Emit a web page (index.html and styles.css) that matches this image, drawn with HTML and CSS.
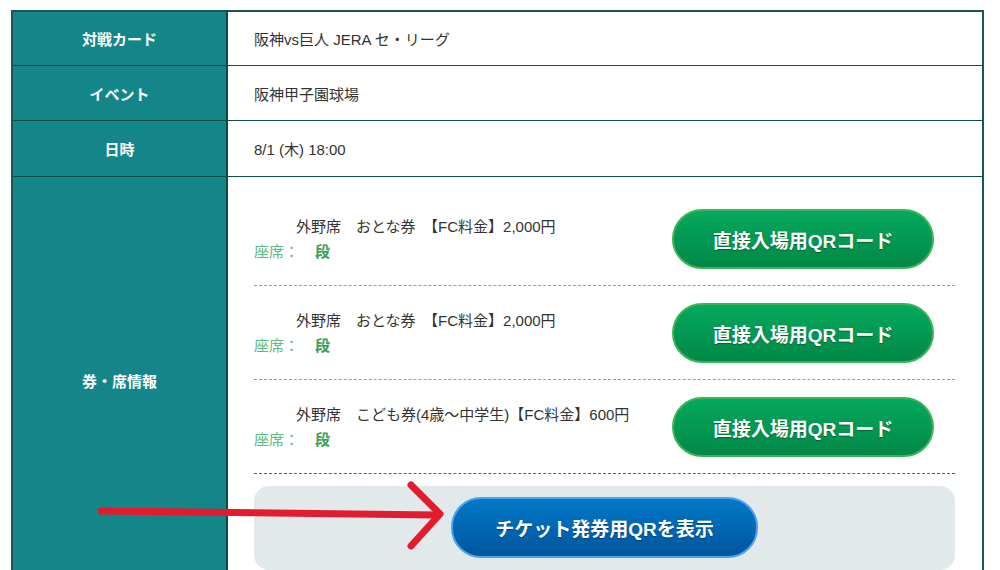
FILE: index.html
```html
<!DOCTYPE html>
<html lang="ja">
<head>
    <meta charset="UTF-8">
    <meta name="viewport" content="width=device-width, initial-scale=1.0">
    <title>チケット詳細</title>
    <link rel="stylesheet" href="styles.css">
</head>
<body>
    <div class="page">
        <table class="ticket-table">
            <tr>
                <th>対戦カード</th>
                <td>阪神vs巨人 JERA セ・リーグ</td>
            </tr>
            <tr>
                <th>イベント</th>
                <td>阪神甲子園球場</td>
            </tr>
            <tr>
                <th>日時</th>
                <td>8/1 (木) 18:00</td>
            </tr>
            <tr>
                <th>券・席情報</th>
                <td class="seat-cell">
                    <!-- 券種ごとの行 -->
                    <div class="seat-item">
                        <div class="seat-info">
                            <p class="seat-name"><span class="seat-block"></span>外野席　おとな券　【FC料金】2,000円</p>
                            <p class="seat-no"><span class="seat-label">座席：</span><span class="seat-row">段</span></p>
                        </div>
                        <a class="btn-green" href="#">直接入場用QRコード</a>
                    </div>
                    <div class="seat-item">
                        <div class="seat-info">
                            <p class="seat-name"><span class="seat-block"></span>外野席　おとな券　【FC料金】2,000円</p>
                            <p class="seat-no"><span class="seat-label">座席：</span><span class="seat-row">段</span></p>
                        </div>
                        <a class="btn-green" href="#">直接入場用QRコード</a>
                    </div>
                    <div class="seat-item last">
                        <div class="seat-info">
                            <p class="seat-name"><span class="seat-block"></span>外野席　こども券(4歳～中学生)【FC料金】600円</p>
                            <p class="seat-no"><span class="seat-label">座席：</span><span class="seat-row">段</span></p>
                        </div>
                        <a class="btn-green" href="#">直接入場用QRコード</a>
                    </div>

                    <div class="issue-box">
                        <a class="btn-blue" href="#">チケット発券用QRを表示</a>
                    </div>
                </td>
            </tr>
        </table>

        <!-- 注釈の矢印 -->
        <svg class="arrow" width="1000" height="570" viewBox="0 0 1000 570">
            <path d="M101 511 L436 515" fill="none" stroke="#e21b2f" stroke-width="7" stroke-linecap="round"/>
            <path d="M411 485 L440 514 L411 546" fill="none" stroke="#e21b2f" stroke-width="7" stroke-linecap="round" stroke-linejoin="round"/>
        </svg>
    </div>
</body>
</html>
```

FILE: styles.css
```css
body {
    margin: 0;
    font-family: "Liberation Sans", "Noto Sans CJK JP", sans-serif;
    color: #333;
    background-color: #fff;
}
.page {
    position: relative;
    padding: 10px 16px 20px 11px;
}
.ticket-table {
    width: 973px;
    border-collapse: collapse;
    border: 2px solid #1b5656;
    font-size: 15px;
}
.ticket-table th {
    width: 211px;
    background-color: #148689;
    color: #fff;
    font-weight: bold;
    text-align: center;
    border: 1px solid #114a4a;
    border-right: 2px solid #114a4a;
}
.ticket-table td {
    height: 54px;
    padding: 0 26px;
    text-align: left;
    border: 1px solid #114a4a;
}
.ticket-table tr:first-child th,
.ticket-table tr:first-child td {
    height: 51px;
}
.ticket-table tr:nth-child(3) td {
    height: 55px;
}
.ticket-table td.seat-cell {
    padding: 15px 27px 14px 26px;
}
.seat-item {
    display: flex;
    align-items: center;
    padding: 17px 0 16px;
    border-bottom: 1px dashed #62b4b4;
}
.seat-item.last {
    border-bottom-color: #2f7272;
}
.seat-info {
    flex: 1;
}
.seat-info p {
    margin: 0;
    line-height: 25px;
}
.seat-block {
    display: inline-block;
    width: 42px;
}
.seat-no {
    color: #5fbb7f;
}
.seat-row {
    margin-left: 16px;
    color: #39a05c;
    font-weight: bold;
}
.btn-green {
    display: flex;
    align-items: center;
    justify-content: center;
    width: 258px;
    height: 56px;
    margin-right: 21px;
    border: 2px solid #3bb557;
    border-radius: 30px;
    background: linear-gradient(#05a95d, #018846);
    color: #fff;
    font-size: 19px;
    font-weight: bold;
    text-decoration: none;
    text-shadow: 0 1px 1px rgba(0, 0, 0, 0.35);
}
.issue-box {
    display: flex;
    justify-content: center;
    margin-top: 12px;
    padding: 11px 0 12px;
    background-color: #e2e9ea;
    border-radius: 15px;
}
.btn-blue {
    display: flex;
    align-items: center;
    justify-content: center;
    width: 303px;
    height: 57px;
    border: 2px solid #4aa3ee;
    border-radius: 30px;
    background: linear-gradient(#0079c9, #00559e);
    color: #fff;
    font-size: 19px;
    font-weight: bold;
    text-decoration: none;
    text-shadow: 0 1px 1px rgba(0, 0, 0, 0.35);
}
.arrow {
    position: absolute;
    top: 0;
    left: 0;
    pointer-events: none;
}
```
